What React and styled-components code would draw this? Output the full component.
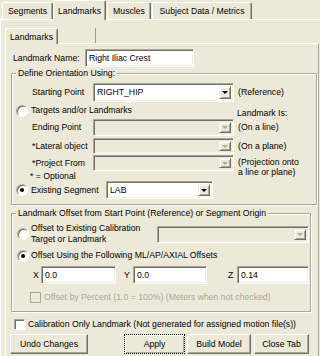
import React from 'react';
import styled, { createGlobalStyle, css } from 'styled-components';

const BG = '#ECE9D8';
const DARK = '#716F64';
const SHADOW = '#ACA899';
const HILITE = '#F1EFE2';
const DIS = '#ACA899';

const GlobalStyle = createGlobalStyle`
  html, body { margin: 0; padding: 0; background: ${BG}; }
  body { font-family: "Liberation Sans", Arial, sans-serif; font-size: 8.7px; color: #000; }
  * { box-sizing: border-box; }
`;

const Screen = styled.div`
  width: 320px;
  height: 356px;
  overflow: hidden;
  background: ${BG};
  display: flex;
  flex-direction: column;
  line-height: 11px;
`;

const TabStrip = styled.div`
  display: flex;
  align-items: flex-end;
  flex: none;
  height: ${(p) => p.$h}px;
  padding-left: ${(p) => p.$pl || 0}px;
`;

const Tab = styled.div`
  position: relative;
  flex: none;
  width: ${(p) => p.$w}px;
  height: ${(p) => p.$h}px;
  margin-left: ${(p) => p.$ml || 0}px;
  margin-bottom: ${(p) => (p.$active ? -1 : 0)}px;
  padding-top: ${(p) => (p.$active ? 2 : 0)}px;
  z-index: ${(p) => (p.$active ? 2 : 1)};
  background: ${BG};
  border-top: 1px solid #fff;
  border-left: 1px solid #fff;
  border-right: 1px solid ${DARK};
  box-shadow: inset -1px 0 0 ${SHADOW};
  border-radius: 2px 2px 0 0;
  display: flex;
  align-items: center;
  justify-content: center;
  white-space: nowrap;
  ${(p) =>
    p.$blank &&
    css`
      border-top-color: transparent;
      border-left-color: transparent;
      box-shadow: none;
      border-right-color: #9a988a;
    `}
`;

const OuterPanel = styled.div`
  flex: 1;
  display: flex;
  flex-direction: column;
  border-top: 1px solid #fff;
  border-left: 1px solid #fff;
  padding: 8px 0 0 4px;
`;

const InnerPanel = styled.div`
  flex: 1;
  width: 314px;
  display: flex;
  flex-direction: column;
  border-top: 1px solid #fff;
  border-left: 1px solid #fff;
  border-right: 1px solid ${SHADOW};
  padding: 5px 0 0 5px;
`;

const Row = styled.div`
  display: flex;
  align-items: center;
  flex: none;
  height: ${(p) => p.$h}px;
  margin-top: ${(p) => p.$mt || 0}px;
  padding-left: ${(p) => p.$pl || 0}px;
`;

const Label = styled.span`
  flex: none;
  width: ${(p) => (p.$w ? `${p.$w}px` : 'auto')};
  margin-left: ${(p) => p.$ml || 0}px;
  white-space: nowrap;
  color: ${(p) => (p.$disabled ? DIS : '#000')};
`;

const Note = styled.span`
  flex: none;
  margin-left: ${(p) => p.$ml || 0}px;
  align-self: ${(p) => (p.$top ? 'flex-start' : 'center')};
  margin-top: ${(p) => p.$mt || 0}px;
  white-space: pre-line;
  line-height: ${(p) => p.$lh || 11}px;
`;

const Group = styled.div`
  flex: none;
  width: ${(p) => p.$w}px;
  margin-top: ${(p) => p.$mt}px;
  padding-bottom: ${(p) => p.$pb}px;
  border: 1px solid ${SHADOW};
  box-shadow: inset 1px 1px 0 #fff, 1px 1px 0 #fff;
  display: flex;
  flex-direction: column;
`;

const Legend = styled.div`
  align-self: flex-start;
  height: 11px;
  line-height: 11px;
  margin: -6px 0 0 4px;
  padding: 0 2px;
  background: ${BG};
  white-space: nowrap;
`;

const sunken = css`
  border: 1px solid;
  border-color: ${SHADOW} #fff #fff ${SHADOW};
  box-shadow: inset 1px 1px 0 ${DARK}, inset -1px -1px 0 ${HILITE};
`;

const TextBox = styled.div`
  ${sunken};
  flex: none;
  width: ${(p) => p.$w}px;
  height: ${(p) => p.$h}px;
  margin-left: ${(p) => p.$ml || 0}px;
  background: #fff;
  padding-left: 3px;
  display: flex;
  align-items: center;
  white-space: nowrap;
`;

const Combo = styled.div`
  ${sunken};
  flex: none;
  width: ${(p) => p.$w}px;
  height: ${(p) => p.$h}px;
  margin-left: ${(p) => p.$ml || 0}px;
  background: ${(p) => (p.$disabled ? BG : '#fff')};
  padding: 2px;
  display: flex;
  align-items: stretch;
`;

const ComboText = styled.span`
  flex: 1;
  padding-left: 1px;
  display: flex;
  align-items: center;
  white-space: nowrap;
  overflow: hidden;
`;

const DropButton = styled.span`
  flex: none;
  width: 12px;
  background: ${BG};
  border: 1px solid;
  border-color: ${HILITE} ${DARK} ${DARK} ${HILITE};
  box-shadow: inset 1px 1px 0 #fff, inset -1px -1px 0 ${SHADOW};
  display: flex;
  align-items: center;
  justify-content: center;
  &::after {
    content: '';
    border-left: 3px solid transparent;
    border-right: 3px solid transparent;
    border-top: 3px solid ${(p) => (p.$disabled ? DIS : '#000')};
  }
`;

const Radio = styled.span`
  flex: none;
  width: 12px;
  height: 12px;
  border-radius: 50%;
  margin-left: ${(p) => p.$ml || 0}px;
  background: #fff;
  border: 1px solid;
  border-color: ${SHADOW} #fff #fff ${SHADOW};
  box-shadow: inset 1px 1px 0 ${DARK};
  display: flex;
  align-items: center;
  justify-content: center;
  &::after {
    content: '';
    width: 4px;
    height: 4px;
    border-radius: 50%;
    background: ${(p) => (p.$checked ? '#000' : 'transparent')};
  }
`;

const Check = styled.span`
  flex: none;
  width: 11px;
  height: 11px;
  margin-left: ${(p) => p.$ml || 0}px;
  background: ${(p) => (p.$disabled ? BG : '#fff')};
  border: 1px solid;
  border-color: ${(p) => (p.$disabled ? `${DIS} ${DIS} ${DIS} ${DIS}` : `${SHADOW} #fff #fff ${SHADOW}`)};
  box-shadow: ${(p) => (p.$disabled ? 'none' : `inset 1px 1px 0 ${DARK}`)};
`;

const ButtonRow = styled.div`
  display: flex;
  flex: none;
  height: 20px;
  margin-top: ${(p) => p.$mt}px;
  margin-left: -1px;
`;

const Button = styled.div`
  flex: none;
  width: ${(p) => p.$w}px;
  height: 20px;
  margin-left: ${(p) => p.$ml || 0}px;
  display: flex;
  align-items: center;
  justify-content: center;
  white-space: nowrap;
  border: 1px solid;
  border-color: #fff ${DARK} ${DARK} #fff;
  box-shadow: inset -1px -1px 0 ${SHADOW};
  ${(p) =>
    p.$focused &&
    css`
      border: 1px dotted #000;
      box-shadow: inset 1px 1px 0 #fff, inset -1px -1px 0 ${SHADOW};
    `}
`;

export default function App() {
  return (
    <>
      <GlobalStyle />
      <Screen>
        <TabStrip $h={19} $pl={2}>
          <Tab $w={51} $h={17}>Segments</Tab>
          <Tab $w={53} $h={20} $active>Landmarks</Tab>
          <Tab $w={44} $h={17} $ml={1}>Muscles</Tab>
          <Tab $w={100} $h={17} $ml={1}>Subject Data / Metrics</Tab>
        </TabStrip>
        <OuterPanel>
          <TabStrip $h={15}>
            <Tab $w={53} $h={16} $active>Landmarks</Tab>
            <Tab $w={38} $h={16} $blank />
          </TabStrip>
          <InnerPanel>
            <Row $h={18} $pl={2}>
              <Label $w={72}>Landmark Name:</Label>
              <TextBox $w={109} $h={18}>Right Iliac Crest</TextBox>
            </Row>

            <Group $w={306} $mt={6} $pb={5}>
              <Legend>Define Orientation Using:</Legend>
              <Row $h={19} $mt={4} $pl={20}>
                <Label $w={61}>Starting Point</Label>
                <Combo $w={141} $h={19}>
                  <ComboText>RIGHT_HIP</ComboText>
                  <DropButton />
                </Combo>
                <Note $ml={4}>(Reference)</Note>
              </Row>
              <Row $h={15} $mt={1} $pl={4}>
                <Radio />
                <Label $w={206} $ml={3}>Targets and/or Landmarks</Label>
                <Note $top $mt={5}>Landmark Is:</Note>
              </Row>
              <Row $h={17} $mt={1} $pl={20}>
                <Label $w={61}>Ending Point</Label>
                <Combo $w={141} $h={17} $disabled>
                  <ComboText />
                  <DropButton $disabled />
                </Combo>
                <Note $ml={4}>(On a line)</Note>
              </Row>
              <Row $h={16} $mt={2} $pl={20}>
                <Label $w={61}>*Lateral object</Label>
                <Combo $w={141} $h={16} $disabled>
                  <ComboText />
                  <DropButton $disabled />
                </Combo>
                <Note $ml={4}>(On a plane)</Note>
              </Row>
              <Row $h={16} $mt={1} $pl={20}>
                <Label $w={61}>*Project From</Label>
                <Combo $w={141} $h={16} $disabled>
                  <ComboText />
                  <DropButton $disabled />
                </Combo>
                <Note $ml={4} $top $mt={2} $lh={10}>{'(Projection onto\na line or plane)'}</Note>
              </Row>
              <Row $h={10} $pl={18}>
                <Label>* = Optional</Label>
              </Row>
              <Row $h={18} $pl={4}>
                <Radio $checked />
                <Label $w={75} $ml={3}>Existing Segment</Label>
                <Combo $w={107} $h={18}>
                  <ComboText>LAB</ComboText>
                  <DropButton />
                </Combo>
              </Row>
            </Group>

            <Group $w={300} $mt={8} $pb={7}>
              <Legend>Landmark Offset from Start Point (Reference) or Segment Origin</Legend>
              <Row $h={22} $mt={4} $pl={5}>
                <Radio />
                <Note $ml={2} style={{ width: 126 }}>
                  {'Offset to Existing Calibration\nTarget or Landmark'}
                </Note>
                <Combo $w={152} $h={17} $disabled>
                  <ComboText />
                  <DropButton $disabled />
                </Combo>
              </Row>
              <Row $h={13} $mt={4} $pl={5}>
                <Radio $checked />
                <Label $ml={2}>Offset Using the Following ML/AP/AXIAL Offsets</Label>
              </Row>
              <Row $h={18} $mt={4} $pl={21}>
                <Label $w={8}>X</Label>
                <TextBox $w={75} $h={18}>0.0</TextBox>
                <Label $w={9} $ml={8}>Y</Label>
                <TextBox $w={74} $h={18}>0.0</TextBox>
                <Label $w={9} $ml={21}>Z</Label>
                <TextBox $w={72} $h={18}>0.14</TextBox>
              </Row>
              <Row $h={13} $mt={7} $pl={18}>
                <Check $disabled />
                <Label $ml={3} $disabled>Offset by Percent (1.0 = 100%) (Meters when not checked)</Label>
              </Row>
            </Group>

            <Row $h={14} $mt={5} $pl={3}>
              <Check />
              <Label $ml={3}>Calibration Only Landmark (Not generated for assigned motion file(s))</Label>
            </Row>

            <ButtonRow $mt={3}>
              <Button $w={78}>Undo Changes</Button>
              <Button $w={61} $ml={36} $focused>Apply</Button>
              <Button $w={64} $ml={2}>Build Model</Button>
              <Button $w={55} $ml={3}>Close Tab</Button>
            </ButtonRow>
          </InnerPanel>
        </OuterPanel>
      </Screen>
    </>
  );
}
